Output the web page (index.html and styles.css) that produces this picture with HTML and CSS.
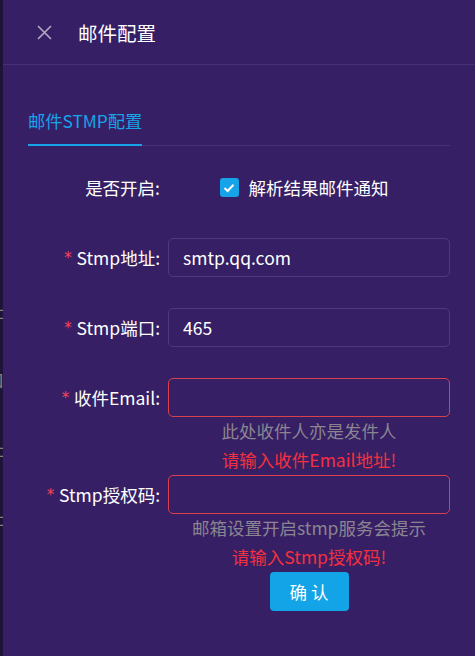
FILE: index.html
```html
<!DOCTYPE html>
<html lang="zh-CN">
<head>
    <meta charset="UTF-8">
    <meta name="viewport" content="width=device-width, initial-scale=1.0">
    <title>邮件配置</title>
    <link rel="stylesheet" href="styles.css">
</head>
<body>

    <!-- 抽屉后面的页面，只露出一条边 -->
    <div class="behind">
        <div class="behind-line"><span>地址</span></div>
        <div class="behind-line"><span>端口</span></div>
        <div class="behind-line"><span>地址</span></div>
        <div class="behind-line"><span>地址</span></div>
    </div>

    <div class="drawer">
        <div class="drawer-header">
            <svg class="close-icon" width="15" height="15" viewBox="0 0 15 15">
                <path d="M1 1 L14 14 M14 1 L1 14" stroke="#b3aac6" stroke-width="1.6" fill="none"/>
            </svg>
            <span class="drawer-title">邮件配置</span>
        </div>

        <div class="drawer-body">
            <div class="tabs">
                <div class="tab active">邮件STMP配置</div>
            </div>

            <form class="mail-form">
                <div class="form-row">
                    <label class="form-label">是否开启:</label>
                    <div class="form-control center">
                        <label class="check">
                            <span class="check-box">
                                <svg width="12" height="10" viewBox="0 0 12 10">
                                    <path d="M1.5 5 L4.6 8 L10.5 1.8" stroke="#fff" stroke-width="2" fill="none"/>
                                </svg>
                            </span>
                            解析结果邮件通知
                        </label>
                    </div>
                </div>

                <div class="form-row">
                    <label class="form-label required">Stmp地址:</label>
                    <div class="form-control">
                        <input class="input" type="text" value="smtp.qq.com">
                    </div>
                </div>

                <div class="form-row">
                    <label class="form-label required">Stmp端口:</label>
                    <div class="form-control">
                        <input class="input" type="text" value="465">
                    </div>
                </div>

                <div class="form-row has-error">
                    <label class="form-label required">收件Email:</label>
                    <div class="form-control">
                        <input class="input" type="text">
                        <div class="help">此处收件人亦是发件人</div>
                        <div class="error">请输入收件Email地址!</div>
                    </div>
                </div>

                <div class="form-row has-error">
                    <label class="form-label required">Stmp授权码:</label>
                    <div class="form-control">
                        <input class="input" type="text">
                        <div class="help">邮箱设置开启stmp服务会提示</div>
                        <div class="error">请输入Stmp授权码!</div>
                    </div>
                </div>

                <div class="form-row">
                    <span></span>
                    <div class="form-control center">
                        <button type="button" class="btn">确 认</button>
                    </div>
                </div>
            </form>
        </div>
    </div>

</body>
</html>
```

FILE: styles.css
```css
body {
    margin: 0;
    display: flex;
    height: 656px;
    background-color: #1e1338;
    font-family: "Noto Sans CJK SC", "Noto Sans", sans-serif;
    font-size: 17.5px;
    color: #fff;
    overflow: hidden;
}

/* 露出来的一小条背景页面 */
.behind {
    width: 3px;
    flex-shrink: 0;
    overflow: hidden;
    padding-top: 298px;
    display: flex;
    flex-direction: column;
    gap: 43px;
}

.behind-line {
    display: flex;
    justify-content: flex-end;
    height: 26px;
    line-height: 26px;
    color: #8a7f80;
    white-space: nowrap;
}

.behind-line span {
    margin-right: -1px;
}

.drawer {
    flex: 1;
    background-color: #361f65;
    display: flex;
    flex-direction: column;
}

.drawer-header {
    height: 64px;
    display: flex;
    align-items: center;
    padding-left: 34px;
    border-bottom: 1px solid #46307a;
}

.close-icon {
    margin-right: 26px;
}

.drawer-title {
    font-size: 19.5px;
    color: #fff;
}

.drawer-body {
    padding: 0 25px;
}

/* 标签页 */
.tabs {
    display: flex;
    height: 80px;
    align-items: flex-end;
    border-bottom: 1px solid #46307a;
}

.tab {
    font-size: 17.3px;
    padding-bottom: 11px;
    color: #6c5f91;
}

.tab.active {
    color: #17a3e8;
    border-bottom: 2px solid #17a3e8;
    margin-bottom: -1px;
}

/* 表单 */
.mail-form {
    display: flex;
    flex-direction: column;
    gap: 31px;
    padding-top: 22px;
}

.has-error + .form-row {
    margin-top: -30px;
}

.form-row {
    display: grid;
    grid-template-columns: 132px 1fr;
    column-gap: 8px;
}

.form-label {
    height: 39px;
    display: flex;
    align-items: center;
    justify-content: flex-end;
    white-space: nowrap;
}

.form-label.required::before {
    content: "*";
    color: #f5455a;
    margin-right: 4px;
    font-family: "DejaVu Sans Mono", monospace;
    font-size: 15px;
}

.form-control {
    display: flex;
    flex-direction: column;
}

.form-control.center {
    align-items: center;
}

.check {
    height: 39px;
    display: flex;
    align-items: center;
    gap: 10px;
    margin-left: -10px;
}

.check-box {
    width: 19px;
    height: 19px;
    border-radius: 3px;
    background-color: #17a3e8;
    display: flex;
    align-items: center;
    justify-content: center;
}

.input {
    height: 39px;
    box-sizing: border-box;
    border: 1px solid #4d3b7f;
    border-radius: 5px;
    background-color: transparent;
    color: #fff;
    font-family: inherit;
    font-size: 17.5px;
    padding: 0 14px;
    outline: none;
}

.has-error .input {
    border-color: #d9404c;
}

.help,
.error {
    text-align: center;
    line-height: 28.5px;
}

.help {
    color: #8a8590;
}

.error {
    color: #f5303f;
}

.btn {
    width: 79px;
    height: 39px;
    border: none;
    border-radius: 4px;
    background-color: #12a4e6;
    color: #fff;
    font-family: inherit;
    font-size: 17.5px;
    cursor: pointer;
}
```
